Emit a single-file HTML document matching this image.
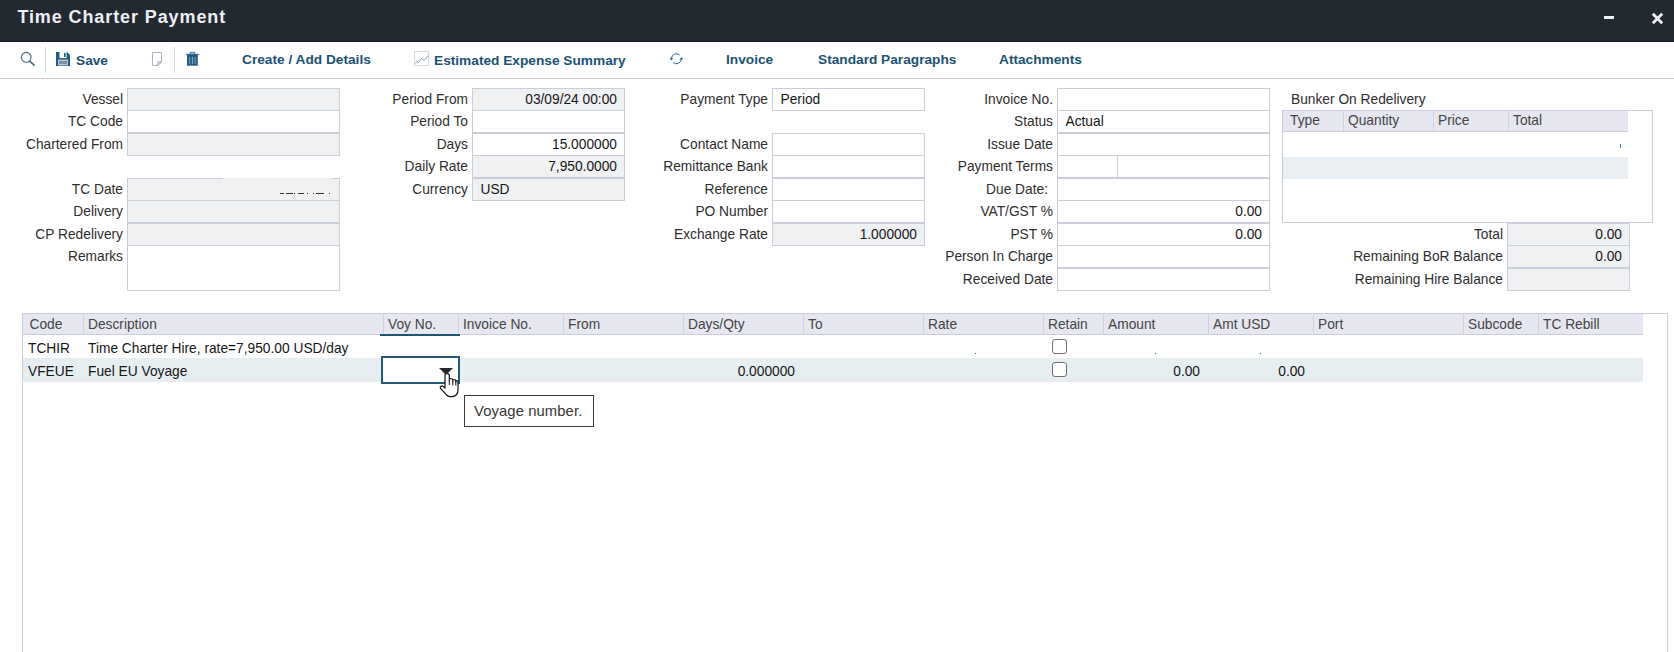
<!DOCTYPE html>
<html><head><meta charset="utf-8"><style>
*{box-sizing:border-box;margin:0;padding:0}
html,body{width:1674px;height:652px;overflow:hidden;background:#fff;font-family:"Liberation Sans",sans-serif;font-size:13.75px;color:#333}
.a{position:absolute}
.t{white-space:nowrap}
.lbl{position:absolute;white-space:nowrap;text-align:right;color:#2e2e2e;line-height:16px}
.box{position:absolute;border:1px solid #c9ced8;background:#fff}
.g{background:#f0f1f3}
.val{position:absolute;white-space:nowrap;color:#161616;line-height:16px}
.tbt{position:absolute;font-weight:bold;color:#1c5274;white-space:nowrap;font-size:13.7px;line-height:16px}
.sep{position:absolute;width:1px;background:#d3d8e0}
.gh{position:absolute;white-space:nowrap;color:#444;line-height:16px}
.vl{position:absolute;width:1px;background:#cfd3dd}
</style></head><body>
<div class="a" style="left:0;top:0;width:1674px;height:42px;background:#232930;border-bottom:1px solid #151c22"></div>
<div class="a t" style="left:17.4px;top:6px;font-size:18px;font-weight:bold;color:#eef0f6;letter-spacing:0.9px;line-height:22px">Time Charter Payment</div>
<div class="a" style="left:1604px;top:16px;width:10px;height:3px;background:#eef0f4"></div>
<svg class="a" style="left:1650px;top:11px" width="16" height="16" viewBox="0 0 16 16"><path d="M2.8 2.85L12.2 12.25M12.2 2.85L2.8 12.25" stroke="#eef0f4" stroke-width="2.8"/></svg>
<div class="a" style="left:0;top:78px;width:1674px;height:1px;background:#c3c8d2"></div>
<svg class="a" style="left:19px;top:50px" width="18" height="18" viewBox="0 0 18 18"><circle cx="7.2" cy="7.3" r="4.9" fill="none" stroke="#3a6a8c" stroke-width="1.1"/><path d="M10.6 10.9L15.6 15.6" stroke="#3a6a8c" stroke-width="1.5"/></svg>
<div class="sep" style="left:45px;top:47px;height:26px"></div>
<svg class="a" style="left:56px;top:52px" width="14" height="14" viewBox="0 0 14 14"><path d="M0 0H11L14 3V14H0Z" fill="#215c80"/><rect x="3.5" y="0" width="7" height="6" fill="#fff"/><rect x="8" y="1" width="1.6" height="4" fill="#215c80"/><rect x="2" y="7.5" width="10" height="6" fill="#b9c4cf"/><rect x="3" y="9" width="8" height="3" fill="#7d8fa0"/></svg>
<div class="tbt" style="left:76px;top:52.5px">Save</div>
<svg class="a" style="left:151px;top:51px" width="13" height="16" viewBox="0 0 13 16"><path d="M1.5 1.5H10.5V10.8L6.8 14.5H1.5Z" fill="#fff" stroke="#a9b3c3" stroke-width="1"/><path d="M6.8 14.5V10.8H10.5Z" fill="#e4e8ee" stroke="#8f9aae" stroke-width="0.8"/></svg>
<div class="sep" style="left:174px;top:47px;height:26px"></div>
<svg class="a" style="left:185px;top:51px" width="16" height="16" viewBox="0 0 16 16"><rect x="1" y="2.8" width="13.4" height="1.2" fill="#5d87a5"/><rect x="5.2" y="1.3" width="4.6" height="1.8" fill="none" stroke="#3d6f92" stroke-width="0.9"/><rect x="2" y="3.4" width="10.8" height="11.3" fill="#215c80"/><rect x="4.1" y="6" width="1" height="7" fill="#7ea3bf"/><rect x="6.9" y="6" width="1" height="7" fill="#8cb0c8"/><rect x="9.6" y="6" width="1" height="7" fill="#7ea3bf"/></svg>
<div class="tbt" style="left:242px;top:51.5px">Create / Add Details</div>
<svg class="a" style="left:414px;top:51px" width="16" height="16" viewBox="0 0 16 16"><rect x="0.6" y="0.6" width="14" height="14" fill="#fff" stroke="#d3d8e0" stroke-width="1"/><path d="M1.5 12.5L3.3 10.3L4.5 11.5L7.5 7.5L10.2 9.5L14.3 4.5" fill="none" stroke="#7890a8" stroke-width="0.9"/></svg>
<div class="tbt" style="left:434px;top:52.5px">Estimated Expense Summary</div>
<svg class="a" style="left:668px;top:52px" width="17" height="14" viewBox="0 0 17 14"><path d="M11.7 3.0A5 5 0 0 0 3.4 6.8" fill="none" stroke="#2f6a92" stroke-width="1"/><path d="M1.6 5.9H5.2L3.4 8.5Z" fill="#2f6a92"/><path d="M5.1 10.5A5 5 0 0 0 13.4 6.7" fill="none" stroke="#2f6a92" stroke-width="1"/><path d="M11.6 7.6H15.2L13.4 5.0Z" fill="#2f6a92"/></svg>
<div class="tbt" style="left:726px;top:51.5px">Invoice</div>
<div class="tbt" style="left:818px;top:51.5px">Standard Paragraphs</div>
<div class="tbt" style="left:999px;top:51.5px">Attachments</div>
<div class="box g" style="left:127px;top:88px;width:213px;height:23px"></div>
<div class="lbl" style="right:1551px;top:92px">Vessel</div>
<div class="box" style="left:127px;top:110px;width:213px;height:23px"></div>
<div class="lbl" style="right:1551px;top:114px">TC Code</div>
<div class="box g" style="left:127px;top:133px;width:213px;height:23px"></div>
<div class="lbl" style="right:1551px;top:137px">Chartered From</div>
<div class="box g" style="left:127px;top:178px;width:213px;height:23px"></div>
<div class="lbl" style="right:1551px;top:182px">TC Date</div>
<div class="box g" style="left:127px;top:200px;width:213px;height:23px"></div>
<div class="lbl" style="right:1551px;top:204px">Delivery</div>
<div class="box g" style="left:127px;top:223px;width:213px;height:23px"></div>
<div class="lbl" style="right:1551px;top:227px">CP Redelivery</div>
<div class="box" style="left:127px;top:245px;width:213px;height:46px"></div>
<div class="lbl" style="right:1551px;top:249px">Remarks</div>
<div class="box g" style="left:472px;top:88px;width:153px;height:23px"></div>
<div class="lbl" style="right:1206px;top:92px">Period From</div>
<div class="val" style="right:1057px;top:92px;text-align:right">03/09/24 00:00</div>
<div class="box" style="left:472px;top:110px;width:153px;height:23px"></div>
<div class="lbl" style="right:1206px;top:114px">Period To</div>
<div class="box" style="left:472px;top:133px;width:153px;height:23px"></div>
<div class="lbl" style="right:1206px;top:137px">Days</div>
<div class="val" style="right:1057px;top:137px;text-align:right">15.000000</div>
<div class="box g" style="left:472px;top:155px;width:153px;height:23px"></div>
<div class="lbl" style="right:1206px;top:159px">Daily Rate</div>
<div class="val" style="right:1057px;top:159px;text-align:right">7,950.0000</div>
<div class="box g" style="left:472px;top:178px;width:153px;height:23px"></div>
<div class="lbl" style="right:1206px;top:182px">Currency</div>
<div class="val" style="left:480.5px;top:182px">USD</div>
<div class="box" style="left:772px;top:88px;width:153px;height:23px"></div>
<div class="lbl" style="right:906px;top:92px">Payment Type</div>
<div class="val" style="left:780.5px;top:92px">Period</div>
<div class="box" style="left:772px;top:133px;width:153px;height:23px"></div>
<div class="lbl" style="right:906px;top:137px">Contact Name</div>
<div class="box" style="left:772px;top:155px;width:153px;height:23px"></div>
<div class="lbl" style="right:906px;top:159px">Remittance Bank</div>
<div class="box" style="left:772px;top:178px;width:153px;height:23px"></div>
<div class="lbl" style="right:906px;top:182px">Reference</div>
<div class="box" style="left:772px;top:200px;width:153px;height:23px"></div>
<div class="lbl" style="right:906px;top:204px">PO Number</div>
<div class="box g" style="left:772px;top:223px;width:153px;height:23px"></div>
<div class="lbl" style="right:906px;top:227px">Exchange Rate</div>
<div class="val" style="right:757px;top:227px;text-align:right">1.000000</div>
<div class="box" style="left:1057px;top:88px;width:213px;height:23px"></div>
<div class="lbl" style="right:621px;top:92px">Invoice No.</div>
<div class="box" style="left:1057px;top:110px;width:213px;height:23px"></div>
<div class="lbl" style="right:621px;top:114px">Status</div>
<div class="val" style="left:1065.5px;top:114px">Actual</div>
<div class="box" style="left:1057px;top:133px;width:213px;height:23px"></div>
<div class="lbl" style="right:621px;top:137px">Issue Date</div>
<div class="box" style="left:1057px;top:155px;width:213px;height:23px"></div>
<div class="lbl" style="right:621px;top:159px">Payment Terms</div>
<div class="a" style="left:1117px;top:156px;width:1px;height:21px;background:#c9ced8"></div>
<div class="box" style="left:1057px;top:178px;width:213px;height:23px"></div>
<div class="lbl" style="right:626px;top:182px">Due Date:</div>
<div class="box" style="left:1057px;top:200px;width:213px;height:23px"></div>
<div class="lbl" style="right:621px;top:204px">VAT/GST %</div>
<div class="val" style="right:412px;top:204px;text-align:right">0.00</div>
<div class="box" style="left:1057px;top:223px;width:213px;height:23px"></div>
<div class="lbl" style="right:621px;top:227px">PST %</div>
<div class="val" style="right:412px;top:227px;text-align:right">0.00</div>
<div class="box" style="left:1057px;top:245px;width:213px;height:23px"></div>
<div class="lbl" style="right:621px;top:249px">Person In Charge</div>
<div class="box" style="left:1057px;top:268px;width:213px;height:23px"></div>
<div class="lbl" style="right:621px;top:272px">Received Date</div>
<div class="t a" style="left:1291px;top:92px;color:#2e2e2e;line-height:16px">Bunker On Redelivery</div>
<div class="box" style="left:1282px;top:110px;width:371px;height:113px"></div>
<div class="a" style="left:1283px;top:111px;width:345px;height:21px;background:#e6e7f0;border-bottom:1px solid #c9ced8"></div>
<div class="vl" style="left:1343px;top:111px;height:20px"></div>
<div class="vl" style="left:1433px;top:111px;height:20px"></div>
<div class="vl" style="left:1508px;top:111px;height:20px"></div>
<div class="gh" style="left:1290px;top:113px">Type</div>
<div class="gh" style="left:1348px;top:113px">Quantity</div>
<div class="gh" style="left:1438px;top:113px">Price</div>
<div class="gh" style="left:1513px;top:113px">Total</div>
<div class="a" style="left:1283px;top:157px;width:345px;height:22px;background:#e8eef2"></div>
<div class="a" style="left:1620px;top:144px;width:1px;height:4px;background:#3a7fc0"></div>
<div class="box g" style="left:1507px;top:223px;width:123px;height:23px"></div>
<div class="lbl" style="right:171px;top:227px">Total</div>
<div class="val" style="right:52px;top:227px;text-align:right">0.00</div>
<div class="box g" style="left:1507px;top:245px;width:123px;height:23px"></div>
<div class="lbl" style="right:171px;top:249px">Remaining BoR Balance</div>
<div class="val" style="right:52px;top:249px;text-align:right">0.00</div>
<div class="box g" style="left:1507px;top:268px;width:123px;height:23px"></div>
<div class="lbl" style="right:171px;top:272px">Remaining Hire Balance</div>
<div class="a" style="left:223px;top:178px;width:109px;height:1px;background:#f0f1f3"></div>
<div class="a" style="left:280px;top:193px;width:4px;height:1px;background:#333"></div>
<div class="a" style="left:286px;top:193px;width:7px;height:1px;background:#333"></div>
<div class="a" style="left:294px;top:193px;width:1px;height:1px;background:#333"></div>
<div class="a" style="left:298px;top:193px;width:6px;height:1px;background:#333"></div>
<div class="a" style="left:307px;top:193px;width:1px;height:1px;background:#333"></div>
<div class="a" style="left:313px;top:193px;width:1px;height:1px;background:#333"></div>
<div class="a" style="left:316px;top:193px;width:8px;height:1px;background:#333"></div>
<div class="a" style="left:329px;top:193px;width:1px;height:1px;background:#333"></div>
<div class="a" style="left:873px;top:177px;width:51px;height:1px;background:#c9ced8"></div>
<div class="a" style="left:975px;top:353px;width:1px;height:1px;background:#3a5a80"></div>
<div class="a" style="left:1155px;top:353px;width:1px;height:1px;background:#3a5a80"></div>
<div class="a" style="left:1260px;top:353px;width:1px;height:1px;background:#3a5a80"></div>
<div class="a" style="left:22px;top:313px;width:1646px;height:400px;border:1px solid #c9ced8;border-bottom:none"></div>
<div class="a" style="left:23px;top:314px;width:1620px;height:21px;background:#e6e7f0;border-bottom:1px solid #c9ced8"></div>
<div class="gh" style="left:29.5px;top:316.6px">Code</div>
<div class="vl" style="left:83px;top:314px;height:21px"></div>
<div class="gh" style="left:88px;top:316.6px">Description</div>
<div class="vl" style="left:383px;top:314px;height:21px"></div>
<div class="gh" style="left:388px;top:316.6px">Voy No.</div>
<div class="vl" style="left:458px;top:314px;height:21px"></div>
<div class="gh" style="left:463px;top:316.6px">Invoice No.</div>
<div class="vl" style="left:563px;top:314px;height:21px"></div>
<div class="gh" style="left:568px;top:316.6px">From</div>
<div class="vl" style="left:683px;top:314px;height:21px"></div>
<div class="gh" style="left:688px;top:316.6px">Days/Qty</div>
<div class="vl" style="left:803px;top:314px;height:21px"></div>
<div class="gh" style="left:808px;top:316.6px">To</div>
<div class="vl" style="left:923px;top:314px;height:21px"></div>
<div class="gh" style="left:928px;top:316.6px">Rate</div>
<div class="vl" style="left:1043px;top:314px;height:21px"></div>
<div class="gh" style="left:1048px;top:316.6px">Retain</div>
<div class="vl" style="left:1103px;top:314px;height:21px"></div>
<div class="gh" style="left:1108px;top:316.6px">Amount</div>
<div class="vl" style="left:1208px;top:314px;height:21px"></div>
<div class="gh" style="left:1213px;top:316.6px">Amt USD</div>
<div class="vl" style="left:1313px;top:314px;height:21px"></div>
<div class="gh" style="left:1318px;top:316.6px">Port</div>
<div class="vl" style="left:1463px;top:314px;height:21px"></div>
<div class="gh" style="left:1468px;top:316.6px">Subcode</div>
<div class="vl" style="left:1538px;top:314px;height:21px"></div>
<div class="gh" style="left:1543px;top:316.6px">TC Rebill</div>
<div class="a" style="left:380px;top:334px;width:80px;height:2px;background:#215672"></div>
<div class="a" style="left:23px;top:358px;width:1620px;height:23.5px;background:#e7eef2"></div>
<div class="val" style="left:28px;top:341px">TCHIR</div>
<div class="val" style="left:88px;top:341px">Time Charter Hire, rate=7,950.00 USD/day</div>
<div class="val" style="left:28px;top:364px">VFEUE</div>
<div class="val" style="left:88px;top:364px">Fuel EU Voyage</div>
<div class="val" style="right:879px;top:364px">0.000000</div>
<div class="val" style="right:474px;top:364px">0.00</div>
<div class="val" style="right:369px;top:364px">0.00</div>
<div class="a" style="left:1052px;top:339px;width:15px;height:15px;border:1.5px solid #707070;border-radius:3px;background:#fff"></div>
<div class="a" style="left:1052px;top:361.5px;width:15px;height:15px;border:1.5px solid #707070;border-radius:3px;background:#fff"></div>
<div class="a" style="left:381px;top:356px;width:79px;height:27.5px;border:2px solid #255a78;background:#fff"></div>
<svg class="a" style="left:438.5px;top:368px" width="14" height="7" viewBox="0 0 14 7"><path d="M0 0H14L7 7Z" fill="#222a30"/></svg>
<svg class="a" style="left:438px;top:371px" width="24" height="28" viewBox="0 0 24 28"><path d="M7 14V4.6Q7 2.5 9.15 2.5Q11.3 2.5 11.3 4.6V9.3Q11.3 7.5 13.05 7.5Q14.8 7.5 14.8 9.3V10.2Q14.8 8.5 16.3 8.5Q17.8 8.5 17.8 10.3V11Q17.8 9.6 18.9 9.6Q20 9.6 20 11.2V18.5Q20 25.6 14 25.6H12.3Q9.8 25.6 8.2 23.6L2.8 17.6Q1.6 16.1 3 15.2Q4.3 14.5 5.4 15.6L7 17.2Z" fill="#fff" stroke="#111" stroke-width="1.2" stroke-linejoin="round"/><path d="M11.3 9.3V14M14.8 10.2V14.5M17.8 11V14.5" stroke="#111" stroke-width="1"/></svg>
<div class="a" style="left:464px;top:395px;width:130px;height:32px;border:1px solid #3c3c3c;background:#fff"></div>
<div class="t a" style="left:474px;top:402px;font-size:14.8px;letter-spacing:0.1px;color:#363636;line-height:18px">Voyage number.</div>
</body></html>
